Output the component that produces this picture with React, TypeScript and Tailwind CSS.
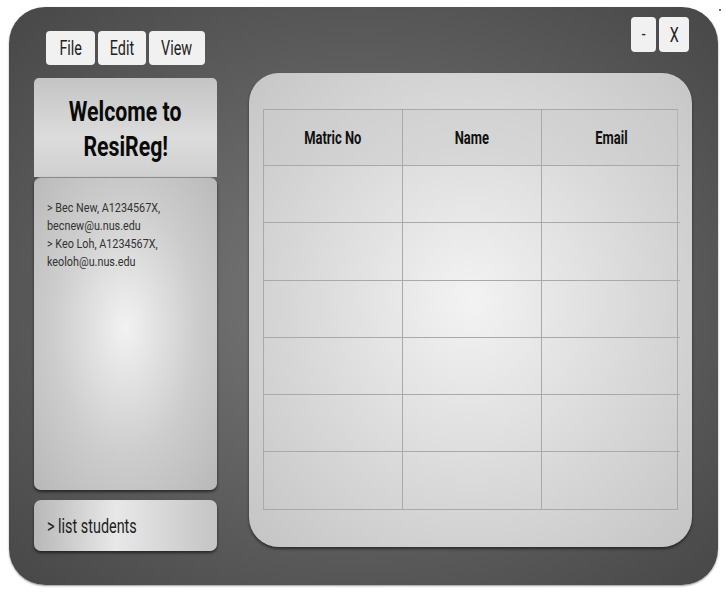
import React from "react";

const font = { fontFamily: 'Roboto, "Liberation Sans", sans-serif' };

function N({ children, c = "origin-center", s = "scale-x-[0.72]" }: { children: React.ReactNode; c?: string; s?: string }) {
  return <span className={`inline-block whitespace-nowrap ${c} ${s}`}>{children}</span>;
}

export default function App() {
  const rows = [0, 1, 2, 3, 4, 5];
  return (
    <div className="w-[726px] h-[593px] bg-white relative overflow-hidden" style={font}>
      <div className="absolute left-[719px] top-[9px] w-[2px] h-[2px] bg-gray-500" />
      <div className="ml-[9px] mt-[7px] w-[709px] h-[578px] rounded-[36px] bg-[radial-gradient(ellipse_at_center,#7a7a7a_0%,#5e5e5e_55%,#474747_100%)] shadow-[0_1px_2px_rgba(0,0,0,0.4)] flex flex-col px-[25px] pt-[10px]">
        <div className="flex items-start justify-between">
          <div className="flex gap-[3px] mt-[14px] ml-[12px]">
            <div className="w-[49px] h-[34px] rounded-[4px] bg-[#f1f1f1] flex items-center justify-center text-[20px] text-[#222]"><N>File</N></div>
            <div className="w-[48px] h-[34px] rounded-[4px] bg-[#f1f1f1] flex items-center justify-center text-[20px] text-[#222]"><N>Edit</N></div>
            <div className="w-[56px] h-[34px] rounded-[4px] bg-[#f1f1f1] flex items-center justify-center text-[20px] text-[#222]"><N>View</N></div>
          </div>
          <div className="flex gap-[3px] mr-[4px]">
            <div className="w-[25px] h-[35px] rounded-[4px] bg-[#f1f1f1] flex items-center justify-center text-[19px] text-[#222]"><N>-</N></div>
            <div className="w-[30px] h-[35px] rounded-[4px] bg-[#f1f1f1] flex items-center justify-center text-[20px] text-[#222]"><N>X</N></div>
          </div>
        </div>
        <div className="flex gap-[32px] -mt-[14px]">
          <div className="w-[183px] flex flex-col mt-[27px]">
            <div className="h-[99px] rounded-t-[5px] bg-[linear-gradient(180deg,#c4c4c4,#dcdcdc_60%,#d0d0d0)] flex flex-col items-center justify-center text-[28px] font-bold text-[#0a0a0a] leading-[35px] pt-[2px]">
              <N s="scale-x-[0.76]">Welcome to</N>
              <N s="scale-x-[0.76]">ResiReg!</N>
            </div>
            <div className="h-[313px] rounded-[7px] bg-[radial-gradient(ellipse_at_50%_48%,#f2f2f2_0%,#cdcdcd_55%,#b8b8b8_100%)] shadow-[0_2px_3px_rgba(0,0,0,0.55)] border-t border-[#8a8a8a] px-[13px] pt-[21px] text-[13px] text-[#333] leading-[18px] flex flex-col items-start">
              <N c="origin-left" s="scale-x-[0.83]">&gt; Bec New, A1234567X,</N>
              <N c="origin-left" s="scale-x-[0.83]">becnew@u.nus.edu</N>
              <N c="origin-left" s="scale-x-[0.83]">&gt; Keo Loh, A1234567X,</N>
              <N c="origin-left" s="scale-x-[0.83]">keoloh@u.nus.edu</N>
            </div>
            <div className="mt-[10px] h-[51px] rounded-[7px] bg-[linear-gradient(90deg,#b8b8b8,#e8e8e8_45%,#c4c4c4)] shadow-[0_2px_3px_rgba(0,0,0,0.55)] flex items-center px-[13px] text-[20px] text-[#222]">
              <N c="origin-left" s="scale-x-[0.72]">&gt; list students</N>
            </div>
          </div>
          <div className="w-[443px] h-[474px] mt-[22px] rounded-[30px] bg-[radial-gradient(ellipse_at_50%_48%,#f3f3f3_0%,#d6d6d6_60%,#c4c4c4_100%)] shadow-[0_2px_3px_rgba(0,0,0,0.5)] px-[14px] pt-[36px]">
            <div className="border border-[#a9a9a9] grid grid-cols-[139px_139px_138px]">
              <div className="h-[55px] flex items-center justify-center text-[18px] font-bold text-[#111] border-r border-[#a9a9a9] bg-[#cbcbcb]/40"><N s="scale-x-[0.72]">Matric No</N></div>
              <div className="h-[55px] flex items-center justify-center text-[18px] font-bold text-[#111] border-r border-[#a9a9a9] bg-[#cbcbcb]/40"><N s="scale-x-[0.72]">Name</N></div>
              <div className="h-[55px] flex items-center justify-center text-[18px] font-bold text-[#111] bg-[#cbcbcb]/40"><N s="scale-x-[0.72]">Email</N></div>
              {rows.map((r) => (
                <React.Fragment key={r}>
                  <div className="h-[57.3px] border-t border-r border-[#a9a9a9]" />
                  <div className="h-[57.3px] border-t border-r border-[#a9a9a9]" />
                  <div className="h-[57.3px] border-t border-[#a9a9a9]" />
                </React.Fragment>
              ))}
            </div>
          </div>
        </div>
      </div>
    </div>
  );
}
